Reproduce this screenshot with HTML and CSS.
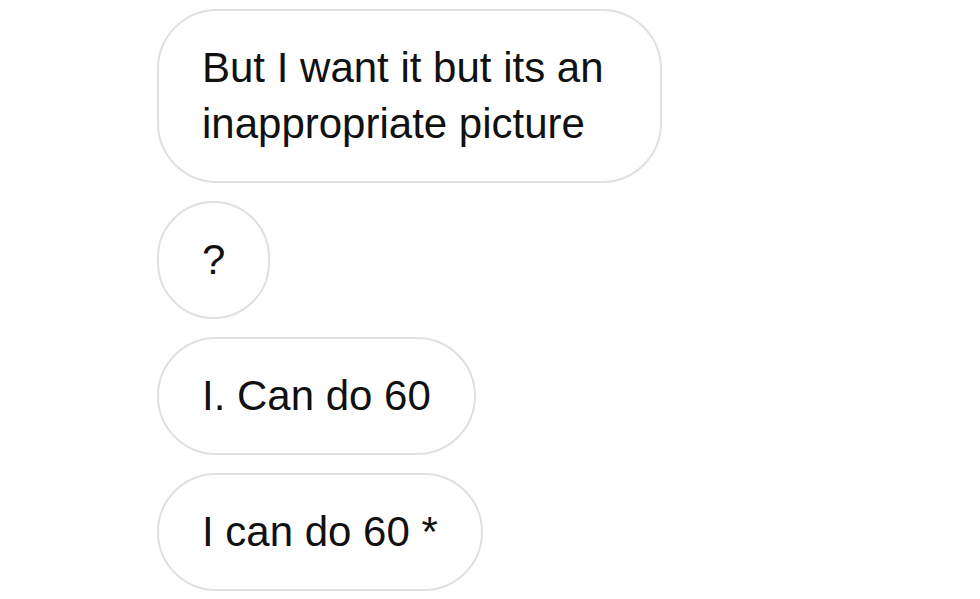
FILE: index.html
```html
<!DOCTYPE html>
<html>
<head>
  <title>Messages</title>
  <link rel="stylesheet" href="styles.css">
</head>
<body>
  <div class="thread">
    <div class="bubble wide">But I want it but its an inappropriate picture</div>
    <div class="bubble">?</div>
    <div class="bubble">I. Can do 60</div>
    <div class="bubble">I can do 60 *</div>
  </div>
</body>
</html>
```

FILE: styles.css
```css
body {
  margin: 0;
  padding: 0;
  background: #fff;
  font-family: 'Liberation Sans', Arial, sans-serif;
  color: #111;
}
.thread {
  display: flex;
  flex-direction: column;
  align-items: flex-start;
  gap: 18px;
  padding: 9px 0 0 157px;
}
.bubble {
  box-sizing: border-box;
  border: 2px solid #e0e0e0;
  border-radius: 60px;
  padding: 29px 43px;
  font-size: 42px;
  line-height: 56px;
  background: #fff;
}
.bubble.wide {
  max-width: 505px;
}
```
